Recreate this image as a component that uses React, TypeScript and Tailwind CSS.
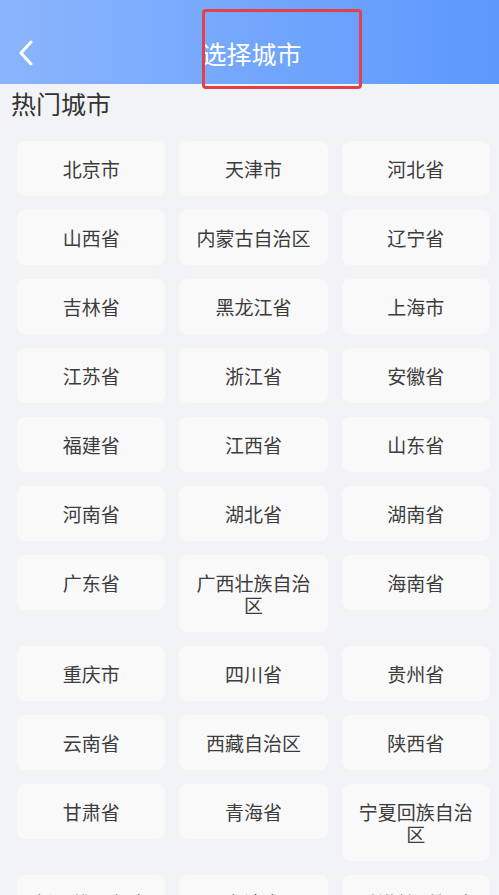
const cities = [
  "北京市", "天津市", "河北省",
  "山西省", "内蒙古自治区", "辽宁省",
  "吉林省", "黑龙江省", "上海市",
  "江苏省", "浙江省", "安徽省",
  "福建省", "江西省", "山东省",
  "河南省", "湖北省", "湖南省",
  "广东省", "广西壮族自治区", "海南省",
  "重庆市", "四川省", "贵州省",
  "云南省", "西藏自治区", "陕西省",
  "甘肃省", "青海省", "宁夏回族自治区",
  "新疆维吾尔自治区", "台湾省", "香港特别行政区",
];

export default function App() {
  return (
    <div
      className="relative w-[499px] h-[895px] overflow-hidden bg-[#f2f3f7]"
      style={{ fontFamily: '"Noto Sans CJK SC", "Noto Sans", sans-serif' }}
    >
      <header className="relative h-[84px] bg-gradient-to-r from-[#8ab5fc] to-[#5c98fc] flex items-center justify-center pt-[22px]">
        <button className="absolute left-[16px] top-[38px] w-[20px] h-[30px] flex items-center justify-center">
          <svg width="16" height="26" viewBox="0 0 16 26" fill="none">
            <polyline points="13,2 3,13 13,24" stroke="white" strokeWidth="3" strokeLinecap="round" strokeLinejoin="round" />
          </svg>
        </button>
        <h1 className="text-[25px] leading-[30px] text-white pl-[4px]">选择城市</h1>
      </header>

      <div className="absolute left-[202px] top-[9px] w-[160px] h-[80px] border-[3px] border-[#e5404a] rounded-[4px] pointer-events-none" />

      <h2 className="pl-[11px] pt-[3px] text-[25px] leading-[32px] text-[#333]">热门城市</h2>

      <div className="grid grid-cols-3 gap-x-[14px] gap-y-[14px] pl-[17px] pr-[9px] mt-[22px] items-start">
        {cities.map((c) => (
          <div
            key={c}
            className="rounded-[8px] bg-[#f9f9f9] px-3 py-[16.5px] text-center text-[19px] leading-[22px] text-[#3c3c3c]"
          >
            {c}
          </div>
        ))}
      </div>
    </div>
  );
}
